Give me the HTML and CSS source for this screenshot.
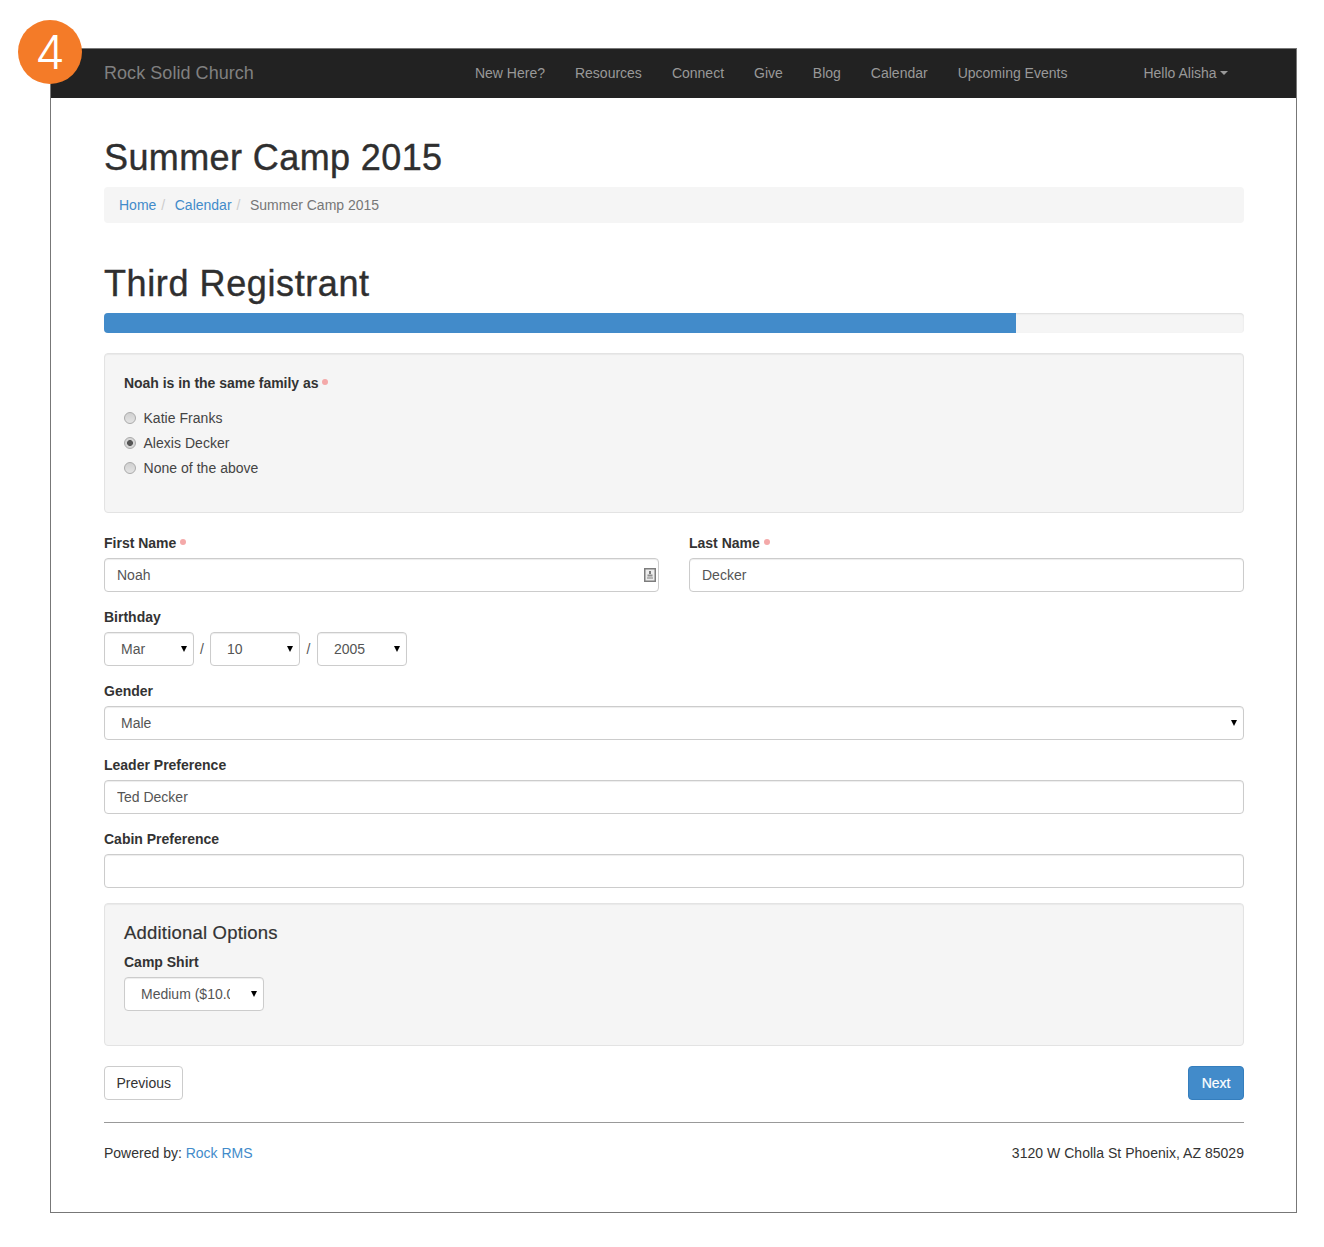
FILE: index.html
```html
<!DOCTYPE html>
<html lang="en">
<head>
<meta charset="utf-8">
<title>Summer Camp 2015</title>
<link rel="stylesheet" href="styles.css">
</head>
<body>
<div class="badge">4</div>
<div class="frame">
  <header class="navbar">
    <a class="brand">Rock Solid Church</a>
    <nav class="nav">
      <a>New Here?</a><a>Resources</a><a>Connect</a><a>Give</a><a>Blog</a><a>Calendar</a><a>Upcoming Events</a>
    </nav>
    <a class="user">Hello Alisha<span class="caret"></span></a>
  </header>
  <main class="content">
    <h1 class="title">Summer Camp 2015</h1>
    <ol class="breadcrumb">
      <li><a>Home</a></li>
      <li><a>Calendar</a></li>
      <li class="active">Summer Camp 2015</li>
    </ol>
    <h1 class="title registrant">Third Registrant</h1>
    <div class="progress"><div class="progress-bar"></div></div>

    <section class="well family">
      <div class="label family-label">Noah is in the same family as<span class="req"></span></div>
      <div class="radios">
        <label class="radio"><input type="radio" name="family">Katie Franks</label>
        <label class="radio"><input type="radio" name="family" checked>Alexis Decker</label>
        <label class="radio"><input type="radio" name="family">None of the above</label>
      </div>
    </section>

    <div class="row">
      <div class="group">
        <label class="label">First Name<span class="req"></span></label>
        <div class="field">
          <input class="control" type="text" value="Noah">
          <svg class="id-icon" width="12" height="14" viewBox="0 0 12 14">
            <rect x="0.75" y="0.75" width="10.5" height="12.5" fill="#ededed" stroke="#7d7d7d" stroke-width="1.5"/>
            <rect x="5" y="3" width="2" height="3" fill="#7d7d7d"/>
            <rect x="3.5" y="6.5" width="5" height="2" fill="#8f8f8f"/>
            <rect x="3" y="9" width="6" height="2" fill="#b5b5b5"/>
          </svg>
        </div>
      </div>
      <div class="group">
        <label class="label">Last Name<span class="req"></span></label>
        <input class="control" type="text" value="Decker">
      </div>
    </div>

    <div class="group">
      <label class="label">Birthday</label>
      <div class="date">
        <div class="select small"><select class="control"><option>Mar</option></select></div>
        <span class="sep">/</span>
        <div class="select small"><select class="control"><option>10</option></select></div>
        <span class="sep">/</span>
        <div class="select small"><select class="control"><option>2005</option></select></div>
      </div>
    </div>

    <div class="group">
      <label class="label">Gender</label>
      <div class="select"><select class="control"><option>Male</option></select></div>
    </div>

    <div class="group">
      <label class="label">Leader Preference</label>
      <input class="control" type="text" value="Ted Decker">
    </div>

    <div class="group">
      <label class="label">Cabin Preference</label>
      <input class="control" type="text" value="">
    </div>

    <section class="well options">
      <h4 class="options-title">Additional Options</h4>
      <div class="group">
        <label class="label">Camp Shirt</label>
        <div class="select shirt"><select class="control"><option>Medium ($10.00)</option></select></div>
      </div>
    </section>

    <div class="actions">
      <a class="btn previous">Previous</a>
      <a class="btn primary">Next</a>
    </div>
    <hr class="rule">
    <footer class="footer">
      <span>Powered by: <a>Rock RMS</a></span>
      <span class="address">3120 W Cholla St Phoenix, AZ 85029</span>
    </footer>
  </main>
</div>
</body>
</html>
```
FILE: styles.css
```css
* { box-sizing: border-box; }
html, body { margin: 0; background: #fff; }
body {
  padding: 48px 0 34px 50px;
  font: 14px/20px "Liberation Sans", Arial, sans-serif;
  color: #333;
  position: relative;
}
a { color: #428bca; text-decoration: none; }

.badge {
  position: absolute;
  left: 18px;
  top: 20px;
  width: 64px;
  height: 64px;
  border-radius: 50%;
  background: #f47b28;
  color: #fff;
  font: 300 47px/64px Inter, "Liberation Sans", sans-serif;
  text-align: center;
}

.frame {
  width: 1247px;
  height: 1165px;
  border: 1px solid #777;
}

.navbar {
  display: flex;
  align-items: center;
  height: 49px;
  padding: 0 52px 1px 53px;
  background: #222;
  color: #999;
}
.navbar a { color: #999; }
.navbar .brand { font-size: 18px; color: #808080; letter-spacing: .05px; }
.nav { display: flex; gap: 30px; margin-left: 221px; }
.navbar .user { margin-left: 76px; padding-right: 15px; display: flex; align-items: center; }
.caret {
  width: 0;
  height: 0;
  margin-left: 3px;
  border-left: 4.5px solid transparent;
  border-right: 4.5px solid transparent;
  border-top: 4.5px solid #999;
}

.content { padding: 39px 52px 0 53px; }

.title {
  margin: 0 0 8px;
  font-size: 36px;
  line-height: 42px;
  font-weight: 400;
  letter-spacing: .4px;
  color: #2f2f2f;
  -webkit-text-stroke: 0.4px #2f2f2f;
}
.registrant { margin-top: 40px; letter-spacing: .6px; }

.breadcrumb {
  display: flex;
  list-style: none;
  margin: 0;
  padding: 8px 15px;
  background: #f5f5f5;
  border-radius: 4px;
  color: #777;
}
.breadcrumb li + li::before {
  content: "/";
  padding: 0 9.5px 0 5px;
  color: #ccc;
}

.progress {
  height: 20px;
  background: #f5f5f5;
  border-radius: 4px;
  overflow: hidden;
  box-shadow: inset 0 1px 2px rgba(0, 0, 0, .1);
  margin-bottom: 20px;
}
.progress-bar { width: 80%; height: 100%; background: #428bca; }

.well {
  background: #f5f5f5;
  border: 1px solid #e3e3e3;
  border-radius: 4px;
  padding: 19px;
  box-shadow: inset 0 1px 1px rgba(0, 0, 0, .05);
  margin-bottom: 20px;
}
.family { height: 160px; }
.family-label { letter-spacing: -.03px; }
.radios { margin-top: 15px; display: flex; flex-direction: column; gap: 5px; }
.radio { display: flex; align-items: center; gap: 7.5px; height: 20px; color: #444; letter-spacing: .03px; }
.radio input {
  appearance: none;
  -webkit-appearance: none;
  width: 12px;
  height: 12px;
  margin: 0;
  border: 1px solid #aaa;
  border-radius: 50%;
  background: linear-gradient(#d0d0d0, #e4e4e4);
}
.radio input:checked {
  background: radial-gradient(circle, #555 0 2.6px, #d6d6d6 3.3px);
}

.label {
  display: block;
  font-weight: 700;
  color: #333;
  margin-bottom: 5px;
}
.req {
  display: inline-block;
  width: 6px;
  height: 6px;
  margin-left: 4px;
  border-radius: 50%;
  background: #f4a9a9;
  vertical-align: 3px;
}

.row { display: grid; grid-template-columns: 555px 555px; gap: 30px; }
.group { margin-bottom: 15px; }
.field { position: relative; }
.id-icon { position: absolute; right: 3px; top: 10px; }

.control {
  display: block;
  width: 100%;
  height: 34px;
  padding: 6px 12px;
  font: 14px/20px "Liberation Sans", Arial, sans-serif;
  color: #555;
  background: #fff;
  border: 1px solid #ccc;
  border-radius: 4px;
  box-shadow: inset 0 1px 1px rgba(0, 0, 0, .075);
  outline: none;
}

.select { position: relative; }
.select select {
  appearance: none;
  -webkit-appearance: none;
  padding-left: 16px;
  padding-right: 33px;
}
.select::after {
  content: "";
  position: absolute;
  right: 7px;
  top: 14px;
  width: 0;
  height: 0;
  border-left: 3.5px solid transparent;
  border-right: 3.5px solid transparent;
  border-top: 6px solid #000;
}
.small { width: 90px; }
.shirt { width: 140px; }

.date { display: flex; align-items: center; }
.sep { width: 17px; text-align: center; color: #555; }
.date .sep:first-of-type { width: 16px; }

.options { height: 143px; }
.options-title {
  margin: 0 0 9px;
  font-size: 18.5px;
  line-height: 20px;
  font-weight: 400;
  letter-spacing: .2px;
  color: #333;
  -webkit-text-stroke: 0.2px #333;
}

.actions { display: flex; justify-content: space-between; }
.btn {
  display: block;
  height: 34px;
  padding: 6px 12px;
  border: 1px solid #ccc;
  border-radius: 4px;
  background: #fff;
  color: #333;
}
.previous { padding: 6px 11.5px; }
.primary {
  padding: 6px 12.5px;
  background: #428bca;
  border-color: #357ebd;
  color: #fff;
  -webkit-text-stroke: 0.2px #fff;
}

.rule { margin: 22px 0 20px; border: 0; border-top: 1px solid #999; }
.footer { display: flex; justify-content: space-between; }
.address { letter-spacing: .03px; }
```
